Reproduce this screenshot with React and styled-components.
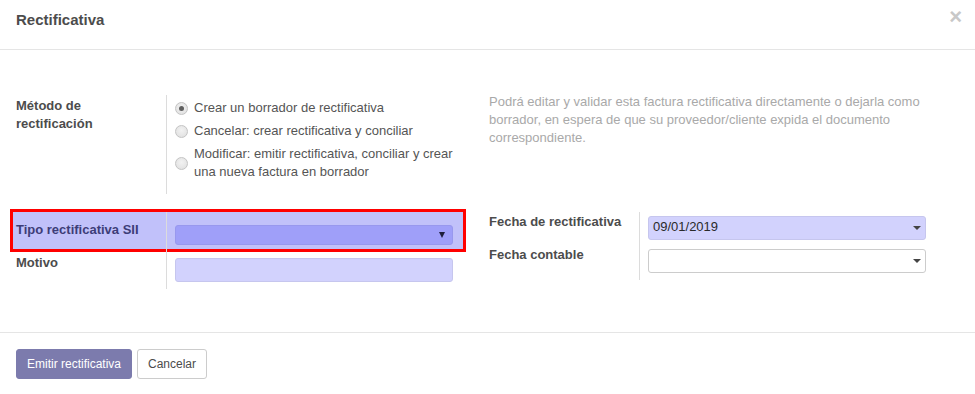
import React from 'react';
import styled, { createGlobalStyle } from 'styled-components';

const GlobalStyle = createGlobalStyle`
  body {
    margin: 0;
    background: #fff;
    font-family: "Liberation Sans", Arial, sans-serif;
    font-size: 13px;
    color: #4c4c4c;
  }
`;

const Modal = styled.div`
  width: 975px;
  height: 394px;
  background: #fff;
`;

const Header = styled.div`
  height: 50px;
  border-bottom: 1px solid #e5e5e5;
  display: flex;
  justify-content: space-between;
  align-items: flex-start;
  padding: 11px 13px 0 16px;
  box-sizing: border-box;
`;

const Title = styled.h4`
  margin: 0;
  font-size: 15px;
  line-height: 18px;
  font-weight: bold;
  color: #4c4c4c;
`;

const Close = styled.span`
  font-size: 22px;
  line-height: 14px;
  font-weight: bold;
  color: #c8c8c8;
  margin-top: -1px;
`;

const Body = styled.div`
  padding: 43px 16px 43px 16px;
`;

const Section = styled.div`
  display: grid;
  grid-template-columns: 450px 470px;
  column-gap: 23px;
  align-items: start;
  margin-top: ${(p) => p.$top || 0}px;
`;

const Group = styled.div`
  display: flex;
  flex-direction: column;
  margin-top: ${(p) => p.$top || 0}px;
`;

const Row = styled.div`
  display: grid;
  grid-template-columns: 150px 1fr;
  background: ${(p) => (p.$highlight ? '#c1c1fa' : 'transparent')};
  outline: ${(p) => (p.$highlight ? '3px solid #ff0000' : 'none')};
  margin: ${(p) => (p.$highlight ? '0 3px 0 -3px' : '0')};
  padding-left: ${(p) => (p.$highlight ? '3px' : '0')};
`;

const Label = styled.div`
  font-weight: bold;
  line-height: 18px;
  padding-top: ${(p) => p.$pt || 0}px;
  color: ${(p) => (p.$highlight ? '#3d3d78' : '#4c4c4c')};
`;

const Cell = styled.div`
  border-left: 1px solid #dcdcdc;
  padding: ${(p) => p.$pad || '0 0 0 8px'};
`;

const RadioList = styled.div`
  display: flex;
  flex-direction: column;
  gap: 5px;
`;

const RadioItem = styled.label`
  display: flex;
  align-items: center;
  gap: 6px;
  line-height: 18px;
  color: #555;
`;

const RadioDot = styled.span`
  flex: 0 0 auto;
  width: 11px;
  height: 11px;
  border-radius: 50%;
  border: 1px solid #c4c4c4;
  background: radial-gradient(circle at 50% 40%, #f2f2f2 0%, #dedede 100%);
  display: flex;
  align-items: center;
  justify-content: center;
  &::after {
    content: '';
    width: 5px;
    height: 5px;
    border-radius: 50%;
    background: ${(p) => (p.$checked ? '#5f5f5f' : 'transparent')};
  }
`;

const Help = styled.div`
  color: #a9a9a9;
  line-height: 18px;
`;

const Field = styled.div`
  position: relative;
  box-sizing: border-box;
  width: 278px;
  height: ${(p) => p.$h}px;
  border-radius: 3px;
  background: ${(p) => p.$bg || '#fff'};
  border: 1px solid ${(p) => p.$border || '#cfcfd8'};
  padding: 0 4px;
  line-height: 20px;
  font-size: 13px;
  color: #2a2a2a;
`;

const Arrow = styled.span`
  position: absolute;
  right: 7px;
  top: 6px;
  width: 0;
  height: 0;
  border-left: 3.5px solid transparent;
  border-right: 3.5px solid transparent;
  border-top: 6px solid #1e1e3c;
`;

const Caret = styled.span`
  position: absolute;
  right: 4px;
  top: 9px;
  width: 0;
  height: 0;
  border-left: 4px solid transparent;
  border-right: 4px solid transparent;
  border-top: 4px solid #444;
`;

const Footer = styled.div`
  border-top: 1px solid #e5e5e5;
  padding: 16px 16px;
  display: flex;
  gap: 5px;
`;

const Button = styled.button`
  font-family: "Liberation Sans", Arial, sans-serif;
  font-size: 12px;
  height: 30px;
  padding: 0 10px;
  border-radius: 3px;
  border: 1px solid ${(p) => (p.$primary ? '#7c7bad' : '#cccccc')};
  background: ${(p) => (p.$primary ? '#7c7bad' : '#fff')};
  color: ${(p) => (p.$primary ? '#fff' : '#4c4c4c')};
  cursor: pointer;
`;

const radios = [
  { text: 'Crear un borrador de rectificativa', checked: true },
  { text: 'Cancelar: crear rectificativa y conciliar' },
  { text: 'Modificar: emitir rectificativa, conciliar y crear una nueva factura en borrador' },
];

export default function App() {
  return (
    <Modal>
      <GlobalStyle />
      <Header>
        <Title>Rectificativa</Title>
        <Close>×</Close>
      </Header>
      <Body>
        <Section>
          <Group $top={2}>
            <Row>
              <Label $pt={2}>
                Método de
                <br />
                rectificación
              </Label>
              <Cell $pad="4px 13px 13px 8px">
                <RadioList>
                  {radios.map((r) => (
                    <RadioItem key={r.text}>
                      <RadioDot $checked={r.checked} />
                      <span>{r.text}</span>
                    </RadioItem>
                  ))}
                </RadioList>
              </Cell>
            </Row>
          </Group>
          <Help>
            Podrá editar y validar esta factura rectificativa directamente o dejarla como borrador,
            en espera de que su proveedor/cliente expida el documento correspondiente.
          </Help>
        </Section>
        <Section $top={18}>
          <Group>
            <Row $highlight>
              <Label $pt={9} $highlight>
                Tipo rectificativa SII
              </Label>
              <Cell $pad="13px 0 4px 8px">
                <Field $h={20} $bg="#9f9ff9" $border="#9898ee">
                  <Arrow />
                </Field>
              </Cell>
            </Row>
            <Row>
              <Label $pt={5}>Motivo</Label>
              <Cell $pad="9px 0 7px 8px">
                <Field $h={24} $bg="#d2d2fd" $border="#c6c6ee" />
              </Cell>
            </Row>
          </Group>
          <Group>
            <Row>
              <Label $pt={1}>Fecha de rectificativa</Label>
              <Cell $pad="4px 0 5px 8px">
                <Field $h={24} $bg="#d2d2fd" $border="#c6c6ee">
                  09/01/2019
                  <Caret />
                </Field>
              </Cell>
            </Row>
            <Row>
              <Label $pt={1}>Fecha contable</Label>
              <Cell $pad="4px 0 7px 8px">
                <Field $h={24} $border="#cccccc">
                  <Caret />
                </Field>
              </Cell>
            </Row>
          </Group>
        </Section>
      </Body>
      <Footer>
        <Button $primary>Emitir rectificativa</Button>
        <Button>Cancelar</Button>
      </Footer>
    </Modal>
  );
}
